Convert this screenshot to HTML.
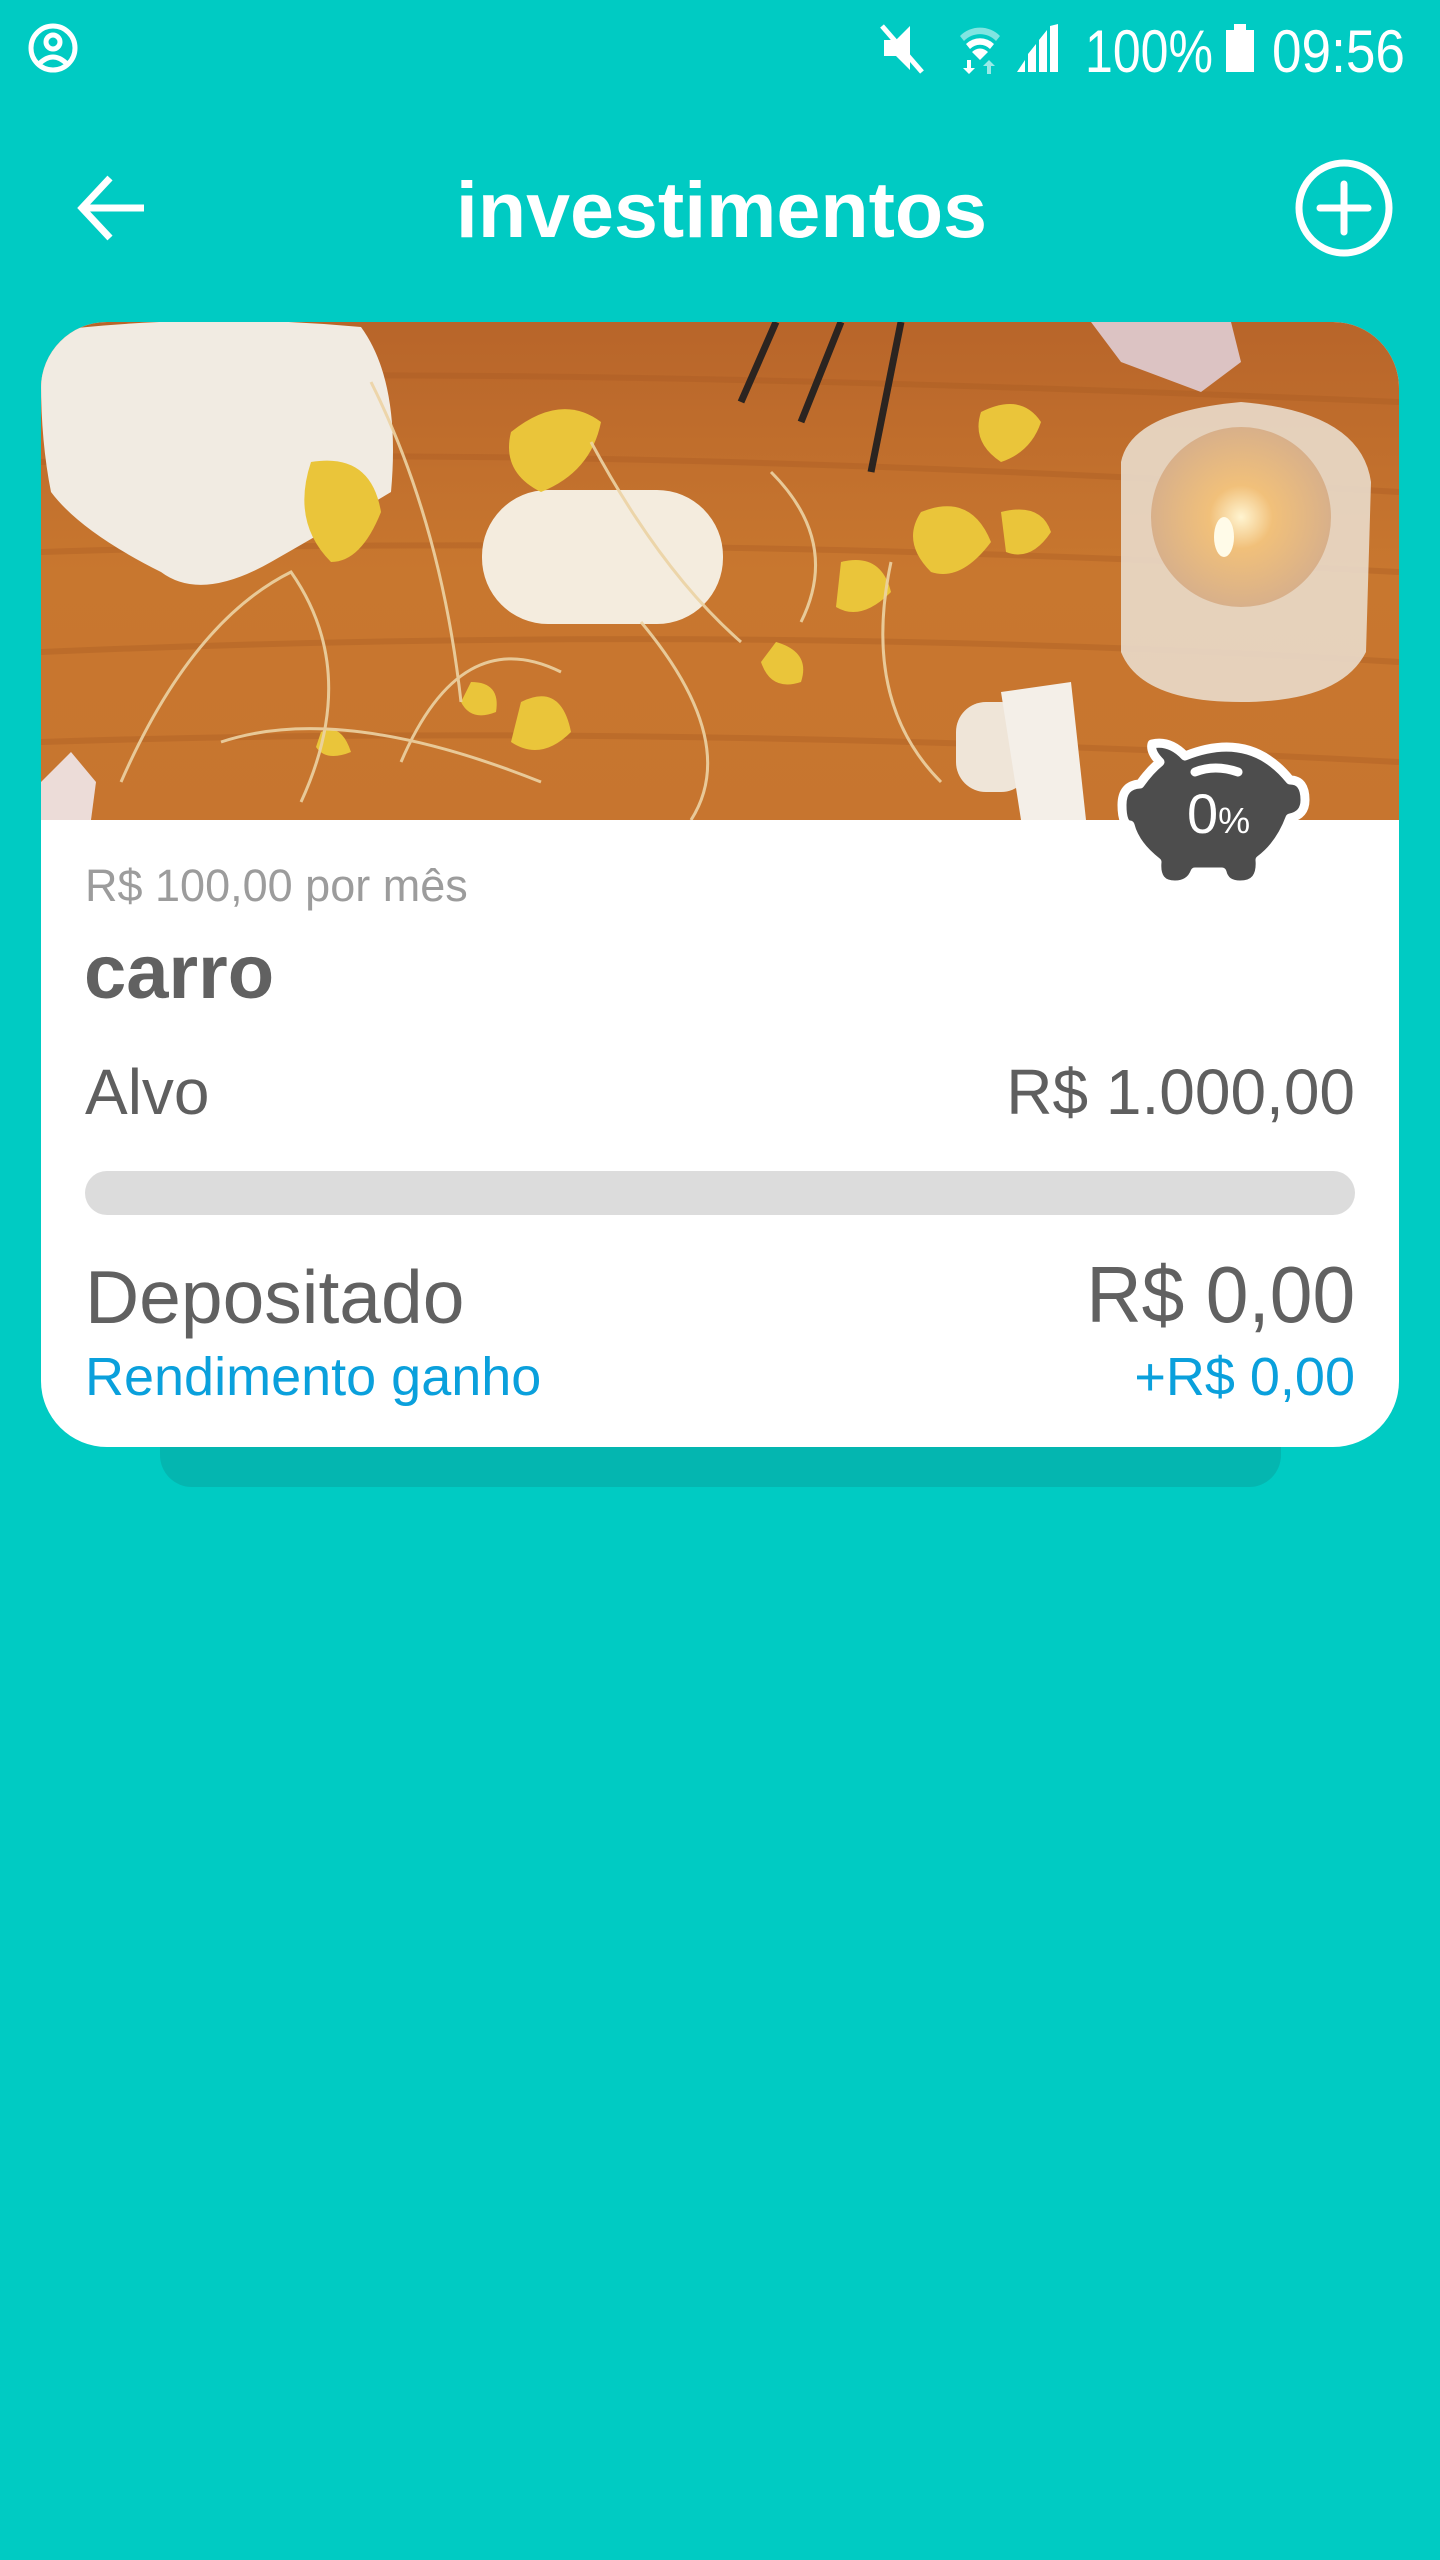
<!DOCTYPE html>
<html><head><meta charset="utf-8">
<style>
*{margin:0;padding:0;box-sizing:border-box}
body{width:1440px;height:2560px;background:#00cbc3;position:relative;overflow:hidden;font-family:"Liberation Sans",sans-serif}
.abs{position:absolute;white-space:nowrap}
</style></head><body>
<svg class="abs" style="left:0;top:0" width="1440" height="100">
<g fill="none" stroke="#fff" stroke-width="5">
<circle cx="53" cy="48" r="22"/><circle cx="53" cy="42" r="7"/>
<path d="M39 64 Q53 50 67 64"/>
</g>
<g fill="#fff">
<path d="M884 40 h12 l14 -14 v44 l-14 -14 h-12z"/>
<path d="M882 26 L922 72" stroke="#fff" stroke-width="5"/>
<path d="M960 36 a28 28 0 0 1 40 0 l-4 5 a22 22 0 0 0 -32 0z" opacity=".5"/>
<path d="M966 44 a20 20 0 0 1 28 0 l-4 5 a14 14 0 0 0 -20 0z"/>
<path d="M972 52 a11 11 0 0 1 16 0 l-8 8z"/>
<path d="M967 60 h4 v8 h4 l-6 6 -6 -6 h4z"/><path d="M987 74 h4 v-8 h4 l-6 -6 -6 6 h4z" opacity=".6"/>
<path d="M1017 72 l8 -12 v12z M1028 72 v-18 l8 -10 v28z M1039 72 v-32 l8 -10 v42z M1050 72 v-46 l8 -2 v48z"/>
<rect x="1226" y="30" width="28" height="42"/><rect x="1234" y="24" width="12" height="8"/>
</g>
<text x="1085" y="72" fill="#fff" font-size="60" textLength="128" lengthAdjust="spacingAndGlyphs">100%</text>
<text x="1272" y="72" fill="#fff" font-size="60" textLength="133" lengthAdjust="spacingAndGlyphs">09:56</text>
</svg>
<svg class="abs" style="left:0;top:140" width="1440" height="140">
<g fill="none" stroke="#fff" stroke-width="7">
<path d="M82 68 H144 M110 38 L82 68 L110 98"/>
<circle cx="1344" cy="68" r="45"/>
<path d="M1344 44 V92 M1320 68 H1368" stroke-linecap="round"/>
</g>
</svg>
<div class="abs" style="left:446px;top:160px;width:551px;text-align:center;color:#fff;font-size:79px;font-weight:bold;line-height:100px">investimentos</div>
<div class="abs" style="left:160px;top:1380px;width:1121px;height:107px;background:#04b6b0;border-radius:0 0 32px 32px"></div>
<div class="abs" style="left:41px;top:322px;width:1358px;height:1125px;background:#fff;border-radius:66px;overflow:hidden">
<svg width="1358" height="498" viewBox="0 0 1358 498">
<defs>
<linearGradient id="w" x1="0" y1="0" x2="0" y2="1"><stop offset="0" stop-color="#b8652a"/><stop offset=".5" stop-color="#c8772f"/><stop offset="1" stop-color="#c7752f"/></linearGradient>
<radialGradient id="c"><stop offset="0" stop-color="#fff4d0"/><stop offset=".35" stop-color="#f1c07a"/><stop offset="1" stop-color="#d8b08a"/></radialGradient>
</defs>
<rect width="1358" height="498" fill="url(#w)"/>
<g stroke="#a85a22" stroke-width="6" opacity=".35" fill="none">
<path d="M0 60 Q400 40 1358 80"/><path d="M0 140 Q500 120 1358 170"/><path d="M0 230 Q600 210 1358 250"/><path d="M0 330 Q700 300 1358 340"/><path d="M0 420 Q600 400 1358 440"/>
</g>
<path d="M0 10 Q160 -10 320 5 Q360 60 350 170 Q300 200 230 240 Q160 280 120 250 Q40 210 10 170 Q0 120 0 60z" fill="#f1ebe2"/>
<g stroke="#2b2420" stroke-width="7"><path d="M735 0 L700 80"/><path d="M800 0 L760 100"/><path d="M860 0 L830 150"/></g>
<path d="M1050 0 h140 l10 40 -40 30 -80 -30z" fill="#dcc3c3"/>
<rect x="441" y="168" width="241" height="134" rx="66" fill="#f4ecde"/>
<path d="M1080 140 Q1090 90 1200 80 Q1320 90 1330 160 L1325 330 Q1300 380 1200 380 Q1100 380 1080 330z" fill="#e9dccb" opacity=".9"/>
<circle cx="1200" cy="195" r="90" fill="url(#c)"/>
<ellipse cx="1183" cy="215" rx="10" ry="20" fill="#fffbe8"/>
<g fill="#eac53a">
<path d="M270 140 Q330 130 340 190 Q320 240 290 240 Q250 200 270 140z"/>
<path d="M470 110 Q520 70 560 100 Q550 150 500 170 Q460 150 470 110z"/>
<path d="M940 90 Q980 70 1000 100 Q990 130 960 140 Q930 120 940 90z"/>
<path d="M880 190 Q930 170 950 220 Q920 260 890 250 Q860 220 880 190z"/>
<path d="M800 240 Q840 230 850 270 Q820 300 795 285z"/>
<path d="M960 190 Q1000 180 1010 210 Q990 240 965 230z"/>
<path d="M735 320 Q770 330 760 360 Q730 370 720 340z"/>
<path d="M480 380 Q520 360 530 410 Q500 440 470 420z"/>
<path d="M430 360 Q460 360 455 390 Q430 400 420 380z"/>
<path d="M280 410 Q300 400 310 430 Q285 440 275 425z"/>
</g>
<g stroke="#ecd3a4" stroke-width="3" fill="none" opacity=".9">
<path d="M80 460 Q150 300 250 250 Q320 350 260 480"/><path d="M330 60 Q400 200 420 380"/><path d="M180 420 Q300 380 500 460"/><path d="M600 300 Q700 420 650 498"/><path d="M550 120 Q620 250 700 320"/><path d="M730 150 Q800 220 760 300"/><path d="M850 240 Q820 380 900 460"/><path d="M360 440 Q420 300 520 350"/>
</g>
<rect x="915" y="380" width="75" height="90" rx="30" fill="#efe5d8"/>
<path d="M960 370 L1030 360 L1045 498 L980 498z" fill="#f4efe8"/>
<path d="M0 460 L30 430 L55 460 L50 498 H0z" fill="#ecdcd8"/>
</svg>
<svg class="abs" style="left:1075px;top:410px" width="200" height="160" viewBox="1116 732 200 160">
<g stroke="#fff" stroke-width="9" stroke-linejoin="round">
<path d="M1152 744 Q1170 740 1185 756 Q1250 730 1290 780 Q1305 780 1305 800 Q1305 815 1290 818 Q1280 845 1260 860 Q1262 885 1240 885 Q1225 885 1222 872 L1195 872 Q1190 885 1175 885 Q1155 885 1157 862 Q1135 845 1130 825 Q1122 825 1122 805 Q1122 785 1140 784 Q1150 770 1160 762 Q1150 752 1152 744z" fill="#4d4d4d"/>
</g>
<path d="M1195 772 Q1215 764 1238 772" stroke="#fff" stroke-width="9" stroke-linecap="round" fill="none"/>
</svg>
<div class="abs" style="left:1146px;top:462px;color:#fff;font-size:56px;line-height:60px">0<span style="font-size:36px">%</span></div>
<div class="abs" style="left:44px;top:536px;color:#9c9c9c;font-size:45px;line-height:56px">R$ 100,00 por mês</div>
<div class="abs" style="left:43px;top:606px;color:#616161;font-size:76px;font-weight:bold;line-height:90px">carro</div>
<div class="abs" style="left:44px;top:730px;color:#5f5f5f;font-size:64px;line-height:80px">Alvo</div>
<div class="abs" style="right:44px;top:730px;color:#5f5f5f;font-size:64px;line-height:80px">R$ 1.000,00</div>
<div class="abs" style="left:44px;top:849px;width:1270px;height:44px;background:#dcdcdc;border-radius:22px"></div>
<div class="abs" style="left:44px;top:930px;color:#616161;font-size:75px;line-height:90px">Depositado</div>
<div class="abs" style="right:44px;top:928px;color:#616161;font-size:80px;line-height:90px;transform:scaleX(.96);transform-origin:right">R$ 0,00</div>
<div class="abs" style="left:44px;top:1023px;color:#0aa0dc;font-size:54px;line-height:64px">Rendimento ganho</div>
<div class="abs" style="right:44px;top:1023px;color:#0aa0dc;font-size:54px;line-height:64px">+R$ 0,00</div>
</div>
</body></html>
